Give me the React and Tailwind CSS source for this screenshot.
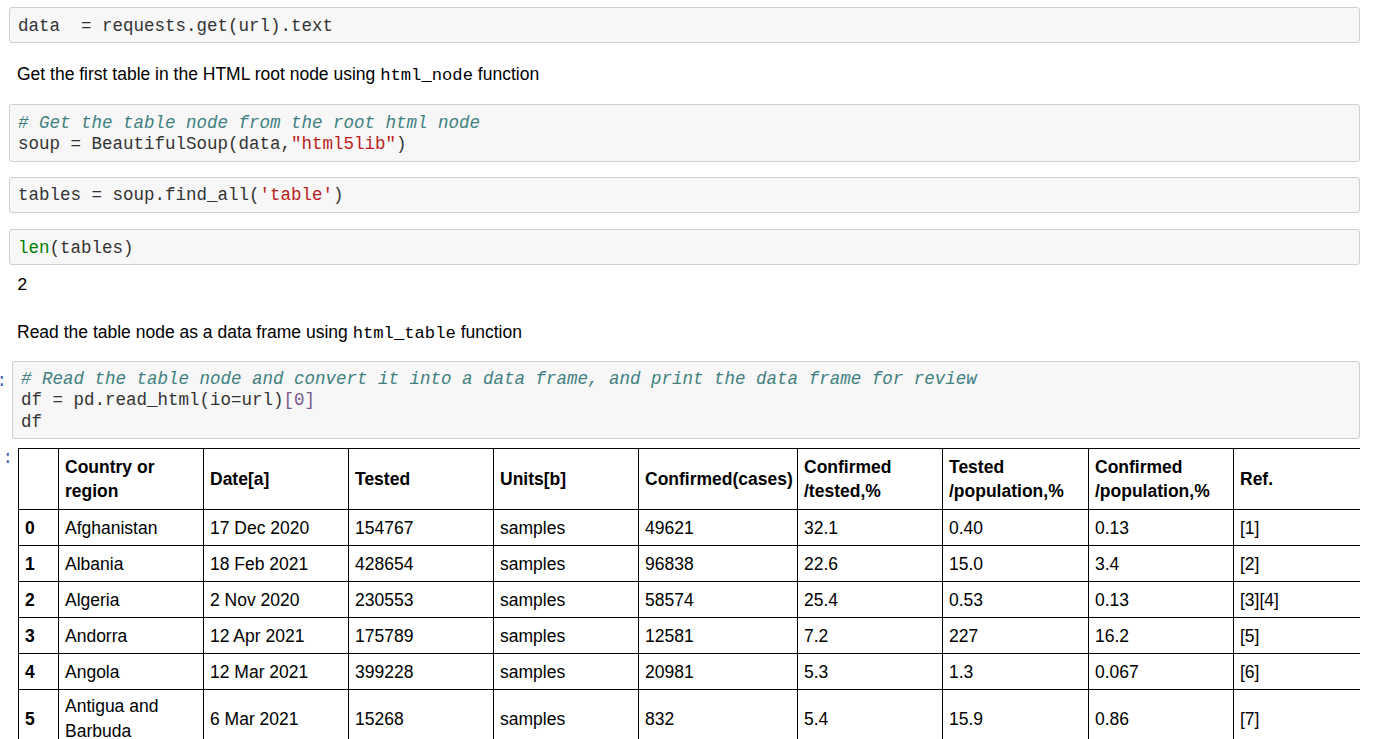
import React from 'react';

const mono = "font-['Liberation_Mono','Courier_New',monospace]";
const sans = "font-['Liberation_Sans',Arial,sans-serif]";

const Comment = ({ children }) => <span className="italic text-[#408080]">{children}</span>;
const Str = ({ children }) => <span className="text-[#ba2121]">{children}</span>;
const Builtin = ({ children }) => <span className="text-[#008000]">{children}</span>;

// prompts are pushed off the left edge; only the trailing colon shows
const Prompt = ({ width, show, className = '' }) => (
  <div className={`flex shrink-0 justify-end ${width} ${mono} text-[17.5px] leading-[21.25px] text-[#3f5fc8] ${className}`}>
    {show && <span className="pr-[5px]">:</span>}
  </div>
);

const CodeCell = ({ children, className = '' }) => (
  <div className={`flex-1 rounded-[3px] border border-[#cfcfcf] bg-[#f7f7f7] px-[8px] pt-[7.5px] pb-[5.5px] ${mono} text-[17.5px] leading-[21.25px] text-[#333] whitespace-pre ${className}`}>
    {children}
  </div>
);

const Markdown = ({ children, className = '' }) => (
  <div className={`pl-[17px] ${sans} text-[17.5px] leading-[25px] text-black ${className}`}>{children}</div>
);

const InlineCode = ({ children }) => <span className={`${mono} text-[17.2px]`}>{children}</span>;

const headers = [
  [''],
  ['Country or', 'region'],
  ['Date[a]'],
  ['Tested'],
  ['Units[b]'],
  ['Confirmed(cases)'],
  ['Confirmed', '/tested,%'],
  ['Tested', '/population,%'],
  ['Confirmed', '/population,%'],
  ['Ref.'],
];

const colWidths = ['w-[40px]', 'w-[145px]', 'w-[145px]', 'w-[145px]', 'w-[145px]', 'w-[159px]', 'w-[145px]', 'w-[146px]', 'w-[145px]', 'w-[145px]'];

const rows = [
  ['0', ['Afghanistan'], '17 Dec 2020', '154767', 'samples', '49621', '32.1', '0.40', '0.13', '[1]'],
  ['1', ['Albania'], '18 Feb 2021', '428654', 'samples', '96838', '22.6', '15.0', '3.4', '[2]'],
  ['2', ['Algeria'], '2 Nov 2020', '230553', 'samples', '58574', '25.4', '0.53', '0.13', '[3][4]'],
  ['3', ['Andorra'], '12 Apr 2021', '175789', 'samples', '12581', '7.2', '227', '16.2', '[5]'],
  ['4', ['Angola'], '12 Mar 2021', '399228', 'samples', '20981', '5.3', '1.3', '0.067', '[6]'],
  ['5', ['Antigua and', 'Barbuda'], '6 Mar 2021', '15268', 'samples', '832', '5.4', '15.9', '0.86', '[7]'],
];

const Lines = ({ lines }) =>
  lines.map((l, i) => (
    <React.Fragment key={i}>
      {i > 0 && <br />}
      {l}
    </React.Fragment>
  ));

const DataFrame = () => (
  <div className="w-[1342px] overflow-hidden">
    <table className={`table-fixed w-[1360px] border-collapse ${sans} text-[17.5px] leading-[24.5px] text-black`}>
      <colgroup>
        {colWidths.map((w, i) => (
          <col key={i} className={w} />
        ))}
      </colgroup>
      <thead>
        <tr className="h-[61px]">
          {headers.map((h, i) => (
            <th key={i} className="border border-black px-[6px] py-[4px] text-left align-middle font-bold whitespace-nowrap">
              <Lines lines={h} />
            </th>
          ))}
        </tr>
      </thead>
      <tbody>
        {rows.map((r) => (
          <tr key={r[0]} className="h-[36px]">
            <th className="border border-black px-[6px] py-[4px] text-left align-middle font-bold">{r[0]}</th>
            <td className="border border-black px-[6px] py-[4px] align-middle whitespace-nowrap">
              <Lines lines={r[1]} />
            </td>
            {r.slice(2).map((v, i) => (
              <td key={i} className="border border-black px-[6px] py-[4px] align-middle whitespace-nowrap">
                {v}
              </td>
            ))}
          </tr>
        ))}
      </tbody>
    </table>
  </div>
);

export default function App() {
  return (
    <div className="h-[739px] w-[1385px] overflow-hidden bg-white pt-[7px]">
      <div className="flex w-[1360px]">
        <Prompt width="w-[9px]" />
        <CodeCell>data  = requests.get(url).text</CodeCell>
      </div>

      <Markdown className="mt-[19px]">
        Get the first table in the HTML root node using <InlineCode>html_node</InlineCode> function
      </Markdown>

      <div className="mt-[16px] flex w-[1360px]">
        <Prompt width="w-[9px]" />
        <CodeCell>
          <Comment># Get the table node from the root html node</Comment>
          {'\n'}soup = BeautifulSoup(data,<Str>"html5lib"</Str>)
        </CodeCell>
      </div>

      <div className="mt-[15px] flex w-[1360px]">
        <Prompt width="w-[9px]" />
        <CodeCell>
          tables = soup.find_all(<Str>'table'</Str>)
        </CodeCell>
      </div>

      <div className="mt-[16px] flex w-[1360px]">
        <Prompt width="w-[9px]" />
        <CodeCell>
          <Builtin>len</Builtin>(tables)
        </CodeCell>
      </div>

      <div className={`mt-[10px] pl-[17px] ${mono} text-[17.5px] leading-[21.25px] text-black`}>2</div>

      <Markdown className="mt-[23px]">
        Read the table node as a data frame using <InlineCode>html_table</InlineCode> function
      </Markdown>

      <div className="mt-[15px] flex w-[1360px]">
        <Prompt width="w-[12px]" show className="pt-[10px]" />
        <CodeCell>
          <Comment># Read the table node and convert it into a data frame, and print the data frame for review</Comment>
          {'\n'}df = pd.read_html(io=url)<span className="text-[#7a5a8a]">[0]</span>
          {'\n'}df
        </CodeCell>
      </div>

      <div className="mt-[9px] flex">
        <Prompt width="w-[18px]" show />
        <DataFrame />
      </div>
    </div>
  );
}
